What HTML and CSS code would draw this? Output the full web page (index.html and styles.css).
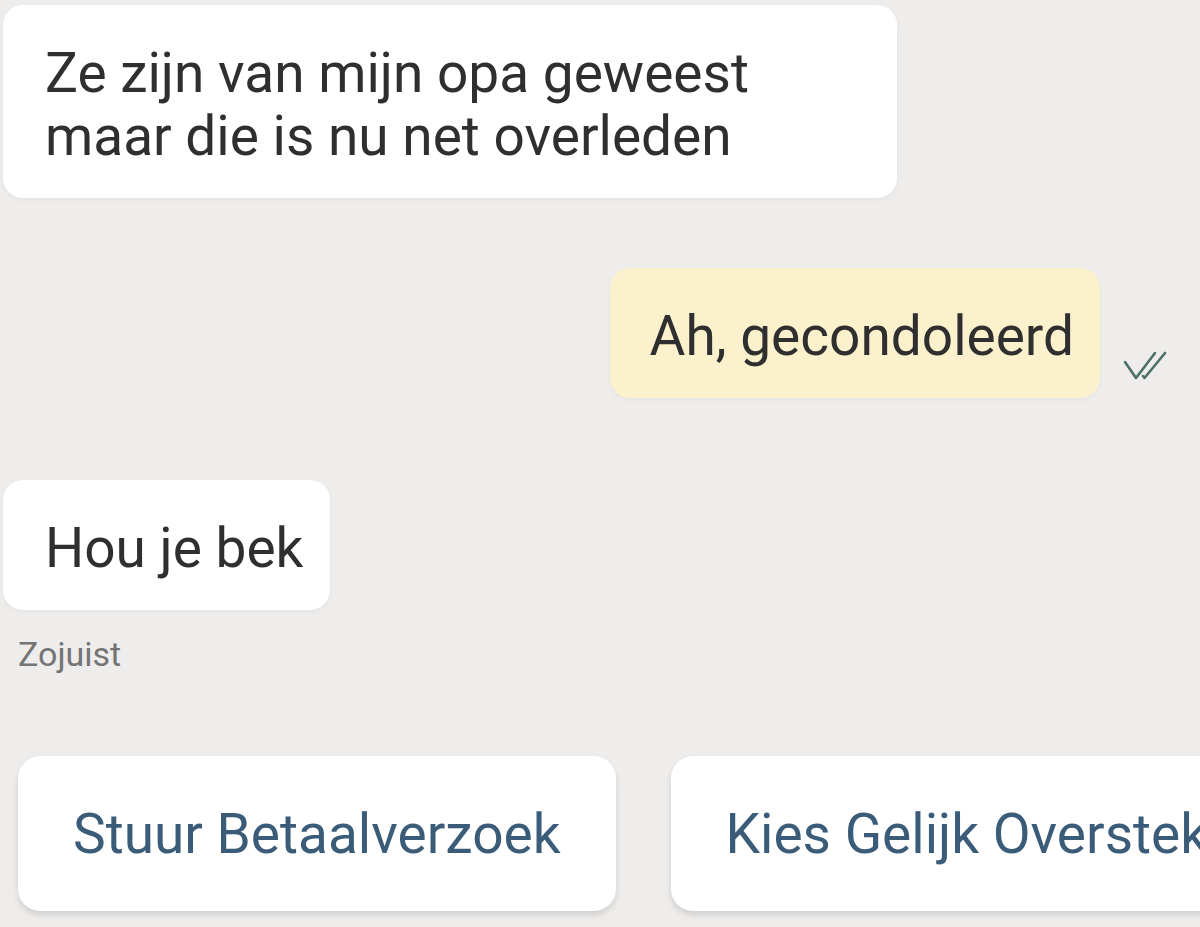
FILE: index.html
```html
<!DOCTYPE html>
<html lang="nl">
<head>
<meta charset="utf-8">
<link rel="stylesheet" href="styles.css">
</head>
<body>
<div class="chat">
  <div class="row in first">
    <div class="bubble white">Ze zijn van mijn opa geweest maar die is nu net overleden</div>
  </div>
  <div class="row out">
    <div class="bubble yellow">Ah, gecondoleerd</div>
    <svg class="check" viewBox="0 0 44 32" width="44" height="32">
      <path d="M2 12 L13 28 L32 3 M20 26 L21.5 28 L42 3" fill="none" stroke="#4d6f69" stroke-width="2.6" stroke-linecap="round" stroke-linejoin="round"/>
    </svg>
  </div>
  <div class="row in third">
    <div class="bubble white short">Hou je bek</div>
  </div>
  <div class="time">Zojuist</div>
  <div class="actions">
    <button class="action">Stuur Betaalverzoek</button>
    <button class="action">Kies Gelijk Oversteken</button>
  </div>
</div>
</body>
</html>
```
FILE: styles.css
```css
html, body {
  margin: 0;
  padding: 0;
  background: #eeedec;
  width: 1200px;
  height: 927px;
  overflow: hidden;
}
.chat {
  display: flex;
  flex-direction: column;
  font-family: Roboto, "Noto Sans", sans-serif;
  color: #2f2f2f;
  padding-top: 5px;
}
.row {
  display: flex;
  align-items: flex-end;
}
.row.in {
  padding-left: 3px;
}
.row.out {
  justify-content: flex-end;
  padding-right: 33px;
  margin-top: 70px;
}
.row.third {
  margin-top: 82px;
}
.bubble {
  font-size: 55px;
  line-height: 63px;
  padding: 37px 40px 30px 42px;
  border-radius: 20px;
  max-width: 812px;
  box-shadow: 0 2px 4px rgba(0,0,0,0.04);
}
.white {
  background: #ffffff;
}
.yellow {
  background: #fcf1cd;
  padding-left: 40px;
  padding-right: 26px;
}
.short {
  padding-right: 27px;
}
.check {
  margin-left: 23px;
  margin-bottom: 16px;
}
.time {
  margin-top: 24px;
  padding-left: 18px;
  font-size: 34px;
  color: #747474;
}
.actions {
  display: flex;
  gap: 55px;
  margin-top: 82px;
  padding-left: 18px;
}
.action {
  flex: none;
  border: none;
  background: #ffffff;
  border-radius: 22px;
  padding: 0 55px;
  height: 155px;
  font-family: Roboto, "Noto Sans", sans-serif;
  font-size: 55px;
  color: #3b5c78;
  box-shadow: 0 4px 6px rgba(0,0,0,0.12);
  white-space: nowrap;
}
```
